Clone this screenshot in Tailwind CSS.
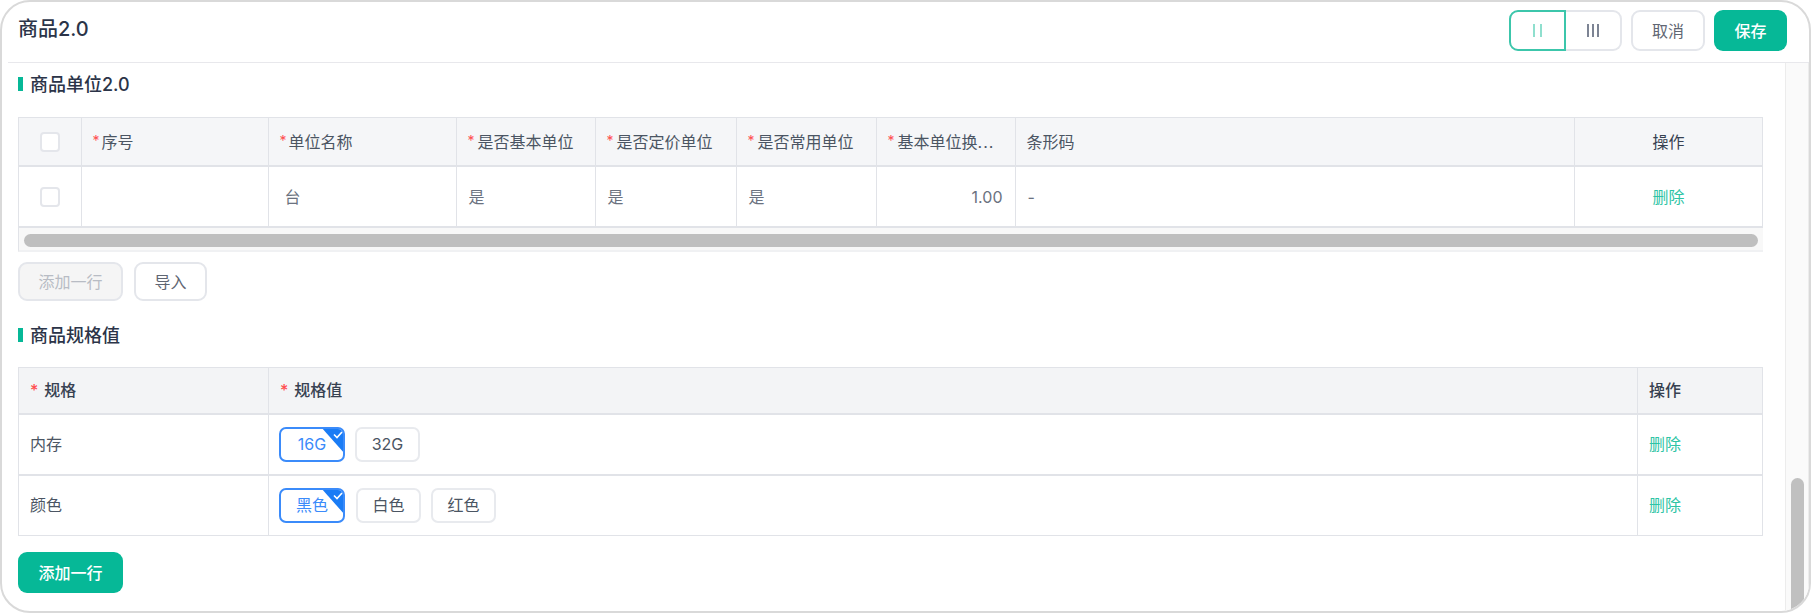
<!DOCTYPE html>
<html lang="zh-CN">
<head>
    <meta charset="UTF-8">
    <meta name="viewport" content="width=device-width, initial-scale=1.0">
    <title>商品2.0</title>
    <script src="https://cdn.jsdelivr.net/npm/@tailwindcss/browser@4"></script>
</head>
<body class="bg-white font-['Inter','Noto_Sans_CJK_SC',sans-serif] text-[16px] text-[#4b5563] overflow-hidden">
    <div class="w-[1811px] h-[613px] border-2 border-[#d9d9d9] rounded-[30px] overflow-hidden flex flex-col bg-white">
        <!-- header -->
        <header class="h-[61px] shrink-0 ml-[6px] pl-[10px] pr-[22px] flex items-center justify-between border-b border-[#e8e8ec]">
            <h1 class="text-[20px] leading-[24px] font-medium text-[#2b3448] -mt-[6px]">商品2.0</h1>
            <div class="flex items-center -mt-[3px]">
                <div class="flex h-[41px] rounded-[9px] mr-[9px]">
                    <button class="w-[57px] border-2 border-[#3cc6ab] rounded-l-[9px] flex items-center justify-center">
                        <span class="w-[9px] h-[13px] border-x-2 border-[#8fdfce]"></span>
                    </button>
                    <button class="w-[56px] border-2 border-l-0 border-[#e4e6eb] rounded-r-[9px] flex items-center justify-center gap-[3px]">
                        <span class="w-[2px] h-[13px] bg-[#7d8494]"></span>
                        <span class="w-[2px] h-[13px] bg-[#7d8494]"></span>
                        <span class="w-[2px] h-[13px] bg-[#7d8494]"></span>
                    </button>
                </div>
                <button class="w-[74px] h-[41px] border-2 border-[#e4e6eb] rounded-[9px] text-[#5f6673] mr-[9px]">取消</button>
                <button class="w-[73px] h-[41px] rounded-[9px] bg-[#06b897] text-white font-medium">保存</button>
            </div>
        </header>

        <div class="flex-1 flex min-h-0">
            <main class="w-[1783px] shrink-0 pl-[16px] pr-[22px] overflow-hidden">
                <!-- 商品单位 -->
                <div class="h-[54px] flex items-center pb-[12px]">
                    <span class="w-[5px] h-[14px] bg-[#06b897] mr-[7px]"></span>
                    <h2 class="text-[18px] font-medium text-[#2b3448]">商品单位2.0</h2>
                </div>
                <div class="border-l border-t border-[#e1e3e8] border-b-2 border-b-[#f0f1f3] bg-[#f8f8f8]">
                    <table class="table-fixed w-full border-collapse bg-white">
                        <colgroup>
                            <col class="w-[62px]"><col class="w-[187px]"><col class="w-[188px]"><col class="w-[139px]"><col class="w-[141px]"><col class="w-[140px]"><col class="w-[139px]"><col><col class="w-[188px]">
                        </colgroup>
                        <thead class="bg-[#f5f6f8] text-[#4b5563]">
                            <tr class="h-[48px] border-b-2 border-[#e1e3e8]">
                                <th class="border-r border-[#e1e3e8] font-normal"><span class="block w-[20px] h-[20px] mx-auto border-2 border-[#e4e6eb] rounded-[4px] bg-white"></span></th>
                                <th class="border-r border-[#e1e3e8] font-normal text-left pl-[11px]"><span class="text-[#ff4d4f] text-[14px] mr-[2px] relative -top-[2px]">*</span>序号</th>
                                <th class="border-r border-[#e1e3e8] font-normal text-left pl-[11px]"><span class="text-[#ff4d4f] text-[14px] mr-[2px] relative -top-[2px]">*</span>单位名称</th>
                                <th class="border-r border-[#e1e3e8] font-normal text-left pl-[11px] whitespace-nowrap overflow-hidden"><span class="text-[#ff4d4f] text-[14px] mr-[3px] relative -top-[2px]">*</span>是否基本单位</th>
                                <th class="border-r border-[#e1e3e8] font-normal text-left pl-[11px] whitespace-nowrap overflow-hidden"><span class="text-[#ff4d4f] text-[14px] mr-[3px] relative -top-[2px]">*</span>是否定价单位</th>
                                <th class="border-r border-[#e1e3e8] font-normal text-left pl-[11px] whitespace-nowrap overflow-hidden"><span class="text-[#ff4d4f] text-[14px] mr-[3px] relative -top-[2px]">*</span>是否常用单位</th>
                                <th class="border-r border-[#e1e3e8] font-normal text-left pl-[11px] whitespace-nowrap overflow-hidden"><span class="text-[#ff4d4f] text-[14px] mr-[3px] relative -top-[2px]">*</span>基本单位换<span class="tracking-[1px]">...</span></th>
                                <th class="border-r border-[#e1e3e8] font-normal text-left pl-[11px]">条形码</th>
                                <th class="border-r border-[#e1e3e8] font-normal text-center text-[#374151]">操作</th>
                            </tr>
                        </thead>
                        <tbody class="text-[#6b7280]">
                            <tr class="h-[61px] border-b-2 border-[#e1e3e8]">
                                <td class="border-r border-[#e1e3e8]"><span class="block w-[20px] h-[20px] mx-auto border-2 border-[#e4e6eb] rounded-[4px]"></span></td>
                                <td class="border-r border-[#e1e3e8]"></td>
                                <td class="border-r border-[#e1e3e8] pl-[16px]">台</td>
                                <td class="border-r border-[#e1e3e8] pl-[12px]">是</td>
                                <td class="border-r border-[#e1e3e8] pl-[12px]">是</td>
                                <td class="border-r border-[#e1e3e8] pl-[12px]">是</td>
                                <td class="border-r border-[#e1e3e8] text-right pr-[12px]">1.00</td>
                                <td class="border-r border-[#e1e3e8] pl-[12px]">-</td>
                                <td class="border-r border-[#e1e3e8] text-center text-[#2ec4a5]">删除</td>
                            </tr>
                        </tbody>
                    </table>
                    <div class="h-[22px] px-[5px] pt-[6px]">
                        <div class="h-[13px] rounded-full bg-[#bfbfbf]"></div>
                    </div>
                </div>
                <div class="flex gap-[11px] mt-[10px]">
                    <button class="w-[105px] h-[39px] border-2 border-[#e4e6eb] rounded-[9px] bg-[#f5f5f5] text-[#b8bcc4]">添加一行</button>
                    <button class="w-[73px] h-[39px] border-2 border-[#e4e6eb] rounded-[9px] text-[#5f6673]">导入</button>
                </div>

                <!-- 商品规格值 -->
                <div class="flex items-center mt-[20px] h-[28px]">
                    <span class="w-[5px] h-[14px] bg-[#06b897] mr-[7px]"></span>
                    <h2 class="text-[18px] font-medium text-[#2b3448]">商品规格值</h2>
                </div>
                <table class="table-fixed w-full border-collapse mt-[18px] border border-[#e1e3e8]">
                    <colgroup>
                        <col class="w-[250px]"><col><col class="w-[125px]">
                    </colgroup>
                    <thead class="bg-[#f3f4f6] text-[#374151]">
                        <tr class="h-[46px] border-b-2 border-[#e1e3e8]">
                            <th class="border-r border-[#e1e3e8] font-medium text-left pl-[11px]"><span class="text-[#ff4d4f] mr-[6px]">*</span>规格</th>
                            <th class="border-r border-[#e1e3e8] font-medium text-left pl-[11px]"><span class="text-[#ff4d4f] mr-[6px]">*</span>规格值</th>
                            <th class="font-medium text-left pl-[11px]">操作</th>
                        </tr>
                    </thead>
                    <tbody class="text-[#4b5563]">
                        <tr class="h-[61px] border-b-2 border-[#e1e3e8]">
                            <td class="border-r border-[#e1e3e8] pl-[11px]">内存</td>
                            <td class="border-r border-[#e1e3e8] pl-[10px]">
                                <div class="flex gap-[10px]">
                                    <span class="relative overflow-hidden w-[66px] h-[35px] border-2 border-[#3b8bfa] rounded-[7px] flex items-center justify-center text-[#3b8bfa]">16G
                                        <svg class="absolute -top-[2px] -right-[2px]" width="24" height="28" viewBox="0 0 24 28"><path d="M0 0H24V27Z" fill="#1a7cf5"/><path d="M13 7.5l3 3 5-5.5" fill="none" stroke="#fff" stroke-width="1.6"/></svg>
                                    </span>
                                    <span class="w-[65px] h-[35px] border-2 border-[#e8eaee] rounded-[7px] flex items-center justify-center">32G</span>
                                </div>
                            </td>
                            <td class="pl-[11px] text-[#2ec4a5]">删除</td>
                        </tr>
                        <tr class="h-[61px]">
                            <td class="border-r border-[#e1e3e8] pl-[11px]">颜色</td>
                            <td class="border-r border-[#e1e3e8] pl-[10px]">
                                <div class="flex gap-[11px]">
                                    <span class="relative overflow-hidden w-[66px] h-[35px] border-2 border-[#3b8bfa] rounded-[7px] flex items-center justify-center text-[#3b8bfa]">黑色
                                        <svg class="absolute -top-[2px] -right-[2px]" width="24" height="28" viewBox="0 0 24 28"><path d="M0 0H24V27Z" fill="#1a7cf5"/><path d="M13 7.5l3 3 5-5.5" fill="none" stroke="#fff" stroke-width="1.6"/></svg>
                                    </span>
                                    <span class="w-[65px] h-[35px] border-2 border-[#e8eaee] rounded-[7px] flex items-center justify-center">白色</span>
                                    <span class="w-[65px] h-[35px] border-2 border-[#e8eaee] rounded-[7px] flex items-center justify-center -ml-[1px]">红色</span>
                                </div>
                            </td>
                            <td class="pl-[11px] text-[#2ec4a5]">删除</td>
                        </tr>
                    </tbody>
                </table>
                <button class="block w-[105px] h-[41px] mt-[16px] rounded-[9px] bg-[#06b897] text-white font-medium">添加一行</button>
            </main>
            <!-- scrollbar -->
            <div class="flex-1 bg-[#fafafa] border-x border-[#ececec] flex flex-col justify-end items-center">
                <div class="w-[13px] h-[133px] rounded-t-full bg-[#c0c0c0]"></div>
            </div>
        </div>
    </div>
</body>
</html>
